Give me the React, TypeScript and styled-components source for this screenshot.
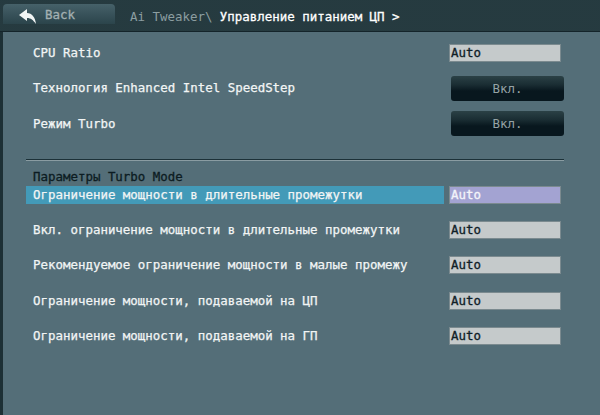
import React from 'react'
import styled, { createGlobalStyle } from 'styled-components'

interface RowProps {
  $selected?: boolean
}

const GlobalStyle = createGlobalStyle`
  html, body {
    margin: 0;
    padding: 0;
    background: #1d3035;
  }
`

const Screen = styled.div`
  width: 600px;
  height: 415px;
  overflow: hidden;
  display: flex;
  flex-direction: column;
  font-family: 'DejaVu Sans Mono', 'Liberation Mono', monospace;
  font-size: 12.45px;
  background: #1d3035;
`

const Header = styled.div`
  height: 32px;
  flex: none;
  display: flex;
  align-items: flex-start;
  background-color: #1e3136;
  background-image: radial-gradient(#2f464b 0.6px, transparent 0.8px);
  background-size: 2px 2px;
  border-bottom: 1px solid #14242a;
  box-sizing: border-box;
`

const BackButton = styled.div`
  width: 112px;
  height: 20px;
  margin: 4px 0 0 3px;
  padding-left: 16px;
  box-sizing: border-box;
  display: flex;
  align-items: center;
  gap: 8px;
  border-radius: 4px 4px 0 0;
  background: linear-gradient(#466169, #2b444b);
  color: #a3b0b2;
  font-size: 12.45px;
  -webkit-text-stroke: 0.3px #a3b0b2;
`

const BackIcon = styled.svg`
  margin-top: 5px;
`

const Crumbs = styled.div`
  margin: 9px 0 0 15px;
  white-space: nowrap;
  color: #8c9ea1;
`

const CrumbCurrent = styled.span`
  color: #fff;
  -webkit-text-stroke: 0.3px #fff;
`

const Panel = styled.div`
  flex: 1;
  margin-left: 3px;
  padding: 3px 39px 0 23px;
  background: #546e78;
`

const Row = styled.div<RowProps>`
  height: 35.5px;
  display: flex;
  align-items: center;
  justify-content: space-between;
`

const Label = styled.div<RowProps>`
  width: 418px;
  height: 18px;
  line-height: 18px;
  padding-left: 7px;
  box-sizing: border-box;
  white-space: nowrap;
  color: #f2f5f5;
  -webkit-text-stroke: 0.25px #f2f5f5;
  background: ${(props) => (props.$selected ? '#439ab8' : 'transparent')};
`

const ValueField = styled.div<RowProps>`
  width: 112px;
  height: 18px;
  line-height: 16px;
  padding-left: 1px;
  box-sizing: border-box;
  border: 1px solid #7b8a8f;
  -webkit-text-stroke: 0.3px currentColor;
  color: ${(props) => (props.$selected ? '#f4f4fa' : '#0f2027')};
  background: ${(props) => (props.$selected ? '#a3a3d2' : '#c5cacb')};
`

const ToggleButton = styled.div`
  width: 113px;
  height: 25px;
  margin-right: -3px;
  display: flex;
  align-items: center;
  justify-content: center;
  border-radius: 3px;
  color: #96a3a6;
  background: linear-gradient(#2b4146 0, #1a2d33 35%, #08171e 60%);
`

const Divider = styled.div`
  height: 1px;
  margin: 17px -3px 0 0;
  background: #1c3138;
  border-bottom: 1px solid #8a9ca2;
`

const SectionTitle = styled.div`
  margin: 8px 0 1px 7px;
  height: 16px;
  line-height: 16px;
  color: #0c1c22;
  -webkit-text-stroke: 0.3px #0c1c22;
`

const SelectedRow = styled(Row)`
  height: 18px;
  margin-bottom: 8.5px;
`

const topRows = ['Технология Enhanced Intel SpeedStep', 'Режим Turbo']

const turboRows = [
  'Вкл. ограничение мощности в длительные промежутки',
  'Рекомендуемое ограничение мощности в малые промежу',
  'Ограничение мощности, подаваемой на ЦП',
  'Ограничение мощности, подаваемой на ГП',
]

const App: React.FunctionComponent<{}> = () => {
  return (
    <Screen>
      <GlobalStyle />
      <Header>
        <BackButton>
          <BackIcon width="18" height="16" viewBox="0 0 18 16">
            <path
              d="M0 6 L8 0 L8 4 C13 4 16 8 17 15 C14 11 12 9 8 9 L8 12 Z"
              fill="#f2f5f5"
            />
          </BackIcon>
          Back
        </BackButton>
        <Crumbs>
          Ai Tweaker\ <CrumbCurrent>Управление питанием ЦП &gt;</CrumbCurrent>
        </Crumbs>
      </Header>
      <Panel>
        <Row>
          <Label>CPU Ratio</Label>
          <ValueField>Auto</ValueField>
        </Row>
        {topRows.map((label) => (
          <Row key={label}>
            <Label>{label}</Label>
            <ToggleButton>Вкл.</ToggleButton>
          </Row>
        ))}
        <Divider />
        <SectionTitle>Параметры Turbo Mode</SectionTitle>
        <SelectedRow>
          <Label $selected>Ограничение мощности в длительные промежутки</Label>
          <ValueField $selected>Auto</ValueField>
        </SelectedRow>
        {turboRows.map((label) => (
          <Row key={label}>
            <Label>{label}</Label>
            <ValueField>Auto</ValueField>
          </Row>
        ))}
      </Panel>
    </Screen>
  )
}

export default App
